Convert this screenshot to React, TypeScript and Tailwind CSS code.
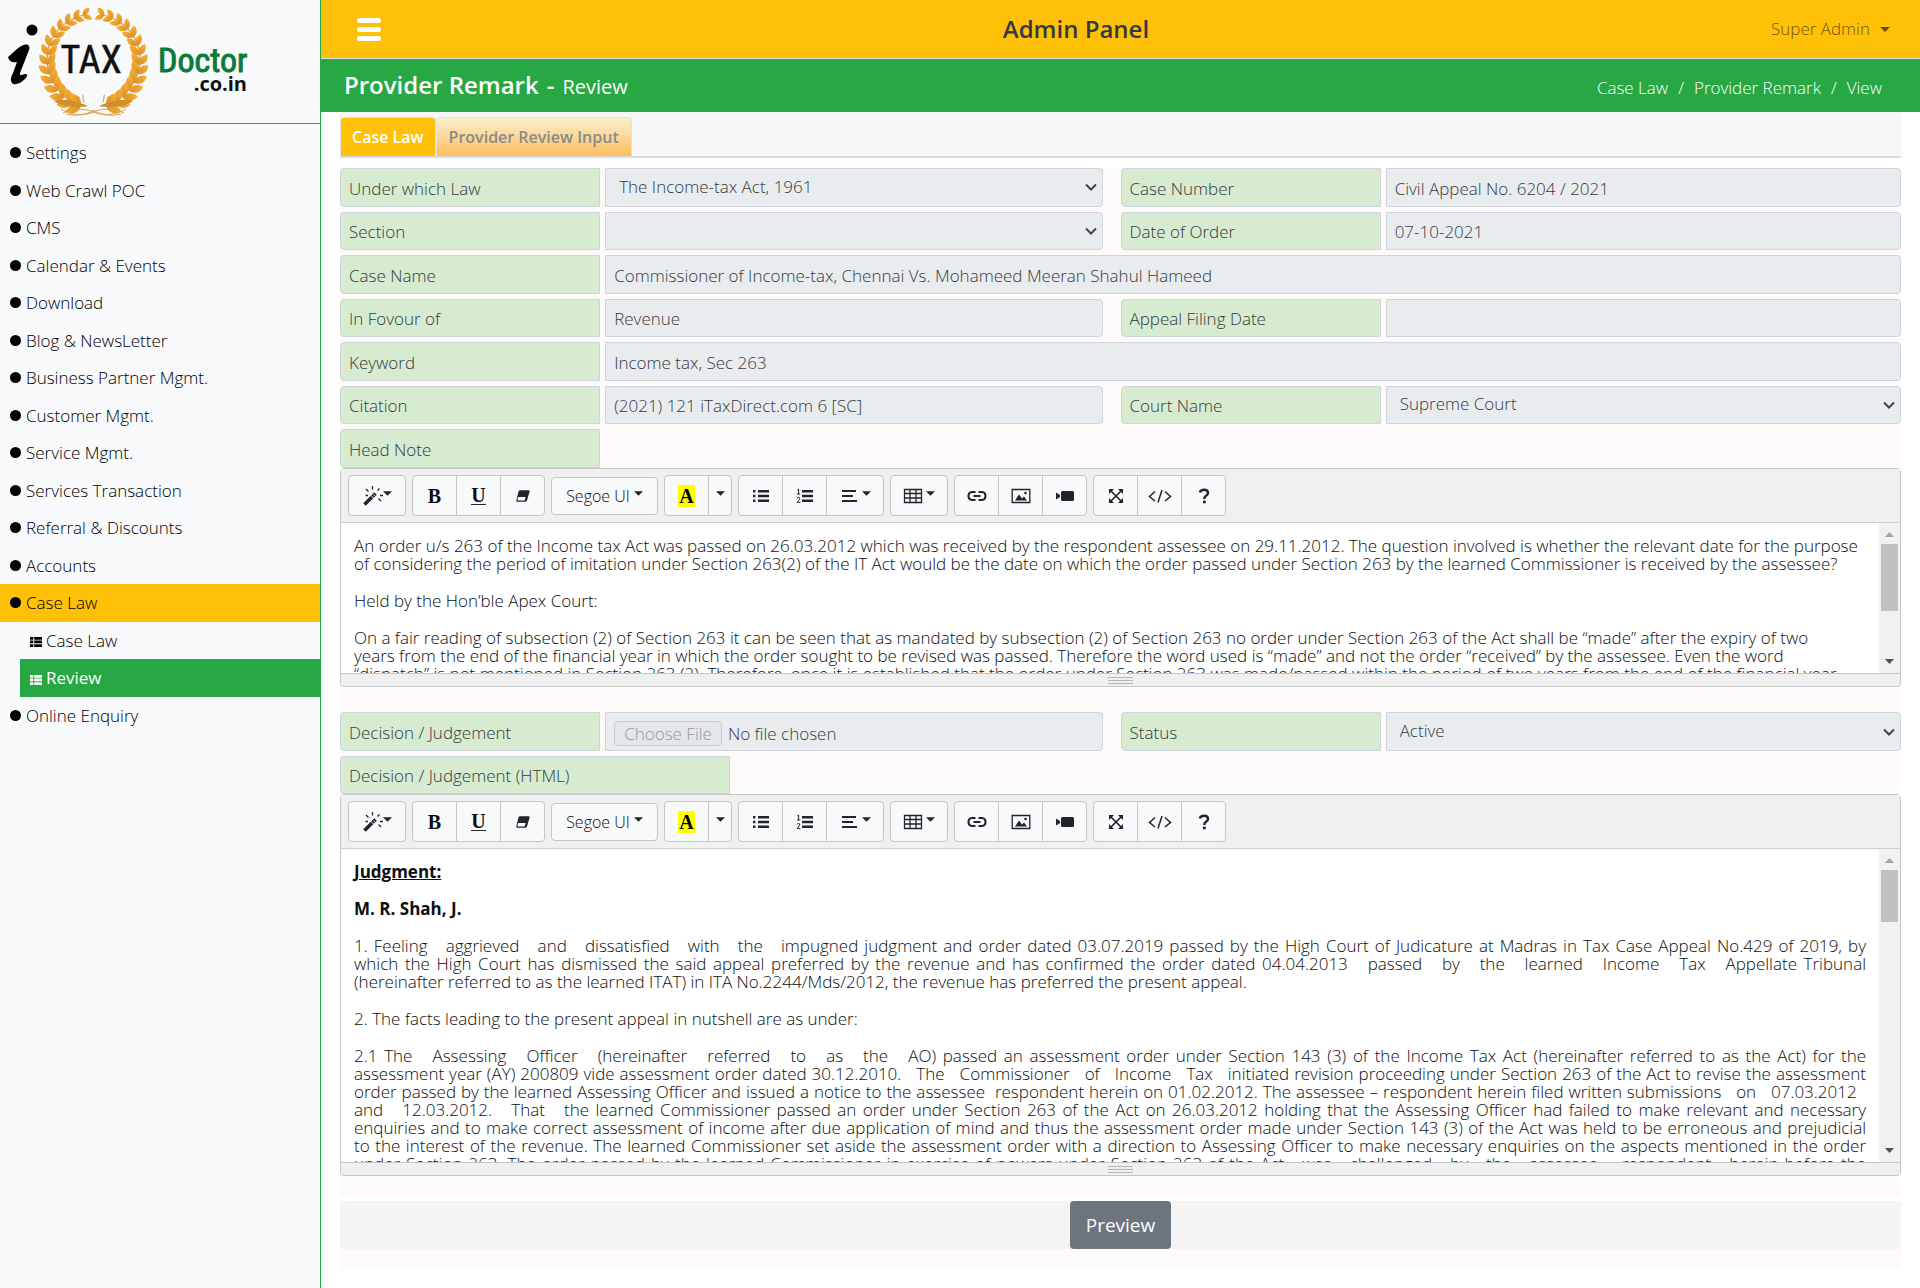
import React from "react";

const menu = [
  "Settings",
  "Web Crawl POC",
  "CMS",
  "Calendar & Events",
  "Download",
  "Blog & NewsLetter",
  "Business Partner Mgmt.",
  "Customer Mgmt.",
  "Service Mgmt.",
  "Services Transaction",
  "Referral & Discounts",
  "Accounts",
];

type Leaf = { x: number; y: number; a: number; s: number };

const leaves: Leaf[] = [];
for (let i = 0; i < 14; i++) {
  const deg = 104 + i * 11.5;
  const t = (deg * Math.PI) / 180;
  const x = 94 + 46 * Math.cos(t);
  const y = 61 - 47 * Math.sin(t);
  const s = 0.72 + i * 0.035;
  leaves.push({ x, y, a: 90 - deg - 36, s });
  leaves.push({ x, y, a: 90 - deg + 36, s });
}
const stem = "M87 14C58 20 46 42 47 62C49 84 64 100 86 106";

function WreathHalf() {
  return (
    <g>
      <path d={stem} fill="none" stroke="url(#gold)" strokeWidth="1.4" />
      {leaves.map((l, i) => (
        <path
          key={i}
          d="M0 0C4 -5 10 -5 14 0C9 4.500 4 4 0 0Z"
          fill="url(#leaf)"
          transform={`translate(${l.x} ${l.y}) rotate(${l.a}) scale(${l.s})`}
        />
      ))}
      <path d="M88 106C76 101 64 98 54 101C62 107 76 108 88 106Z" fill="#cf8f2c" />
      <path d="M84 102C82 97 84 95 82 95M78 101C76 97 78 96 80 98" fill="none" stroke="#cf8f2c" strokeWidth="1" />
      <path d="M61 109C72 116 86 116 96 111C104 108 116 109 124 113M66 114C78 117 88 114 94 110" fill="none" stroke="#d9a24c" strokeWidth="1" />
    </g>
  );
}

function Logo() {
  return (
    <svg viewBox="0 0 260 120" width="260" height="120" role="img" aria-label="iTaxDoctor.co.in">
      <defs>
        <linearGradient id="gold" x1="0" y1="0" x2="0" y2="1">
          <stop offset="0" stopColor="#f9ae2b" />
          <stop offset="1" stopColor="#c98a2a" />
        </linearGradient>
        <linearGradient id="leaf" x1="0" y1="0" x2="1" y2="0">
          <stop offset="0" stopColor="#d9902a" />
          <stop offset="1" stopColor="#f9b032" />
        </linearGradient>
      </defs>
      <WreathHalf />
      <g transform="translate(187 0) scale(-1 1)">
        <WreathHalf />
      </g>
      <circle cx="32" cy="30" r="5.5" />
      <path d="M8 57C13 53 19 46 25 44.500C28 44 30.500 46 29 50L20 73C19.500 76 22 75 25 74C28 73.500 28 76 25 79C21 83 15 86 12 83C10 80 11 77 13 73L17 62C14 63 9 62 8 57Z" />
      <text x="91" y="73" textAnchor="middle" fontFamily="'Roboto Condensed','Liberation Sans Narrow',sans-serif" fontWeight="400" fontSize="38" fill="#111" stroke="#111" strokeWidth=".5">TAX</text>
      <text x="158" y="72" fontFamily="'Roboto Condensed','Liberation Sans Narrow',sans-serif" fontWeight="400" fontSize="34" fill="#0b7a3b" stroke="#0b7a3b" strokeWidth="1">Doctor</text>
      <text x="247" y="91" textAnchor="end" fontFamily="'Open Sans',sans-serif" fontWeight="700" fontSize="20" fill="#111">.co.in</text>
    </svg>
  );
}

function ListIcon() {
  return (
    <svg viewBox="0 0 12 10" className="h-[10px] w-[12px] shrink-0" fill="currentColor" aria-hidden="true">
      <path d="M0 0h3.300v2.700H0zM4.200 0H12v2.700H4.200zM0 3.600h3.300v2.700H0zM4.200 3.600H12v2.700H4.200zM0 7.200h3.300V10H0zM4.200 7.200H12V10H4.200z" />
    </svg>
  );
}

function Sidebar() {
  return (
    <aside className="w-[321px] shrink-0 border-r border-[#28a745] bg-[#f8f9fa]">
      <a href="#home" className="block h-[124px] border-b border-[#28a745]">
        <Logo />
      </a>
      <nav className="mt-[10px] grid min-h-[600px] auto-rows-fr text-[17px] text-black">
        {menu.map((m) => (
          <MenuItem key={m} label={m} />
        ))}
        <MenuItem label="Case Law" active />
        <a href="#case-law" className="ml-5 flex items-center gap-1 pl-[10px]">
          <span className="pt-1"><ListIcon /></span>
          Case Law
        </a>
        <a href="#review" className="ml-5 flex items-center gap-1 bg-[#28a745] pl-[10px] font-normal text-white">
          <span className="pt-1"><ListIcon /></span>
          Review
        </a>
        <MenuItem label="Online Enquiry" />
      </nav>
    </aside>
  );
}

function MenuItem({ label, active }: { label: string; active?: boolean }) {
  return (
    <a href="#menu" className={`flex items-center gap-[5px] pl-[10px] ${active ? "bg-[#ffc107]" : ""}`}>
      <span className="h-[11px] w-[11px] rounded-full bg-black" />
      {label}
    </a>
  );
}

const labelCls = "flex h-full items-center rounded-l border border-[#ced4da] bg-[#d6ebd0] px-2 pt-0.5 text-[17px] text-[#343a40]";
const fieldCls = "block h-full w-full border border-[#ced4da] bg-[#e9ecef] text-[17px] text-[#343a40]";

function Label({ id, children }: { id: string; children: React.ReactNode }) {
  return (
    <div className="col-span-2">
      <label htmlFor={id} className={labelCls}>
        {children}
      </label>
    </div>
  );
}

type Place = "left" | "right" | "full";

function cell(p: Place) {
  if (p === "left") return "col-span-4 pl-[5px] pr-[18px]";
  if (p === "right") return "col-span-4 pl-[5px]";
  return "col-span-10 pl-[5px]";
}

function TextField({ id, value, place }: { id: string; value: string; place: Place }) {
  return (
    <div className={cell(place)}>
      <input id={id} type="text" readOnly value={value} className={`${fieldCls} rounded-r px-2 pt-0.5`} />
    </div>
  );
}

function SelectField({ id, value, place }: { id: string; value: string; place: Place }) {
  return (
    <div className={cell(place)}>
      <div className="relative h-full">
        <select id={id} defaultValue={value} className={`${fieldCls} appearance-none rounded-r pb-[2px] pl-[13px]`}>
          <option value={value}>{value}</option>
        </select>
        <svg viewBox="0 0 12 8" className="pointer-events-none absolute top-1/2 right-[6px] h-2 w-3 -translate-y-1/2" aria-hidden="true">
          <path d="M1 1.500L6 6.500L11 1.500" fill="none" stroke="#444" strokeWidth="2" />
        </svg>
      </div>
    </div>
  );
}

function Caret() {
  return (
    <svg viewBox="0 0 10 5" className="mb-1 h-[5px] w-[9px] shrink-0" fill="#212529" aria-hidden="true">
      <path d="M0 0H10L5 5Z" />
    </svg>
  );
}

const ico = "h-[18px] w-[18px] shrink-0";

function WandIcon() {
  return (
    <svg viewBox="0 0 20 20" className="h-5 w-5 shrink-0" aria-hidden="true">
      <path d="M1.500 18.500L9 11" stroke="#212529" strokeWidth="3.600" />
      <path d="M9.500 10.500L12.500 7.500" stroke="#212529" strokeWidth="3.600" />
      <path d="M10.300 8.400L12 10" stroke="#f8f9fa" strokeWidth=".8" />
      <path d="M9.500 0V3.500M3 3L5.500 5.500M16.500 2.500L14.500 4.500M17 9.500H20M15.500 12.500L18 15M2.500 9.500H5" stroke="#212529" strokeWidth="1.300" />
    </svg>
  );
}

function EraserIcon() {
  return (
    <svg viewBox="0 0 18 18" className={ico} aria-hidden="true">
      <path d="M6 3.200H14.500Q16 3.200 15.600 4.600L13 13.400Q12.600 14.800 11 14.800H3.200Q2 14.800 2.300 13.600L4.600 4.300Q5 3.200 6 3.200Z" fill="#212529" />
      <path d="M4.100 10H11.600L10.700 13.600H3.400Z" fill="#f8f9fa" />
    </svg>
  );
}

function UlIcon() {
  return (
    <svg viewBox="0 0 18 18" className={ico} fill="#212529" aria-hidden="true">
      <path d="M1 3h2.400v2.400H1zM6 3h11v2.400H6zM1 7.800h2.400v2.400H1zM6 7.800h11v2.400H6zM1 12.600h2.400V15H1zM6 12.600h11V15H6z" />
    </svg>
  );
}

function OlIcon() {
  return (
    <svg viewBox="0 0 18 18" className={ico} fill="#212529" aria-hidden="true">
      <path d="M6 3h11v2.400H6zM6 7.800h11v2.400H6zM6 12.600h11V15H6z" />
      <path d="M1.300 3L2.600 2V7M1 7H4.200M1 11.200Q2.400 9.800 3.800 11Q4.200 12.200 1.200 15.400H4.400" fill="none" stroke="#212529" strokeWidth="1" />
    </svg>
  );
}

function AlignIcon() {
  return (
    <svg viewBox="0 0 18 18" className={ico} fill="#212529" aria-hidden="true">
      <path d="M2 3h14v2H2zM2 8h11v2H2zM2 13h15v2H2z" />
    </svg>
  );
}

function TableIcon() {
  return (
    <svg viewBox="0 0 20 18" className="h-[18px] w-5 shrink-0" aria-hidden="true">
      <path d="M1.500 2.500H18.500V15.500H1.500ZM1.500 6.500H18.500M1.500 11H18.500M7 2.500V15.500M13 2.500V15.500" fill="none" stroke="#212529" strokeWidth="1.300" />
    </svg>
  );
}

function LinkIcon() {
  return (
    <svg viewBox="0 0 20 18" className="h-[18px] w-5 shrink-0" aria-hidden="true">
      <path d="M8.500 5H5Q1.500 5.300 1.500 9T5 13H8.500M11.500 5H15Q18.500 5.300 18.500 9T15 13H11.500M6.500 9H13.500" fill="none" stroke="#212529" strokeWidth="2.100" />
    </svg>
  );
}

function PictureIcon() {
  return (
    <svg viewBox="0 0 20 18" className="h-[18px] w-5 shrink-0" aria-hidden="true">
      <path d="M1.200 2.500H18.800V15.500H1.200Z" fill="none" stroke="#212529" strokeWidth="1.300" />
      <path d="M4 13.500L8 7.500L11 11.500L13 9.500L16 13.500Z" fill="#212529" />
      <circle cx="14.500" cy="6" r="1.300" fill="#212529" />
    </svg>
  );
}

function VideoIcon() {
  return (
    <svg viewBox="0 0 20 18" className="h-[18px] w-5 shrink-0" fill="#212529" aria-hidden="true">
      <path d="M7.500 4H17.500Q19 4 19 5.500V12.500Q19 14 17.500 14H7.500Q6 14 6 12.500V5.500Q6 4 7.500 4ZM1 5.500L5 8V10L1 12.500Z" />
    </svg>
  );
}

function FullIcon() {
  return (
    <svg viewBox="0 0 18 18" className={ico} aria-hidden="true">
      <path d="M3.500 3.500L14.500 14.500M14.500 3.500L3.500 14.500" stroke="#212529" strokeWidth="1.600" />
      <path d="M2 7V2H7ZM11 2H16V7ZM2 11V16H7ZM16 11V16H11Z" fill="#212529" />
    </svg>
  );
}

function CodeIcon() {
  return (
    <svg viewBox="0 0 24 18" className="h-[18px] w-6 shrink-0" aria-hidden="true">
      <path d="M7 4.500L1.500 9.500L7 14M17 4.500L22.500 9.500L17 14M14 3L10 15.500" fill="none" stroke="#212529" strokeWidth="1.500" />
    </svg>
  );
}

function HelpIcon() {
  return (
    <svg viewBox="0 0 18 18" className={ico} aria-hidden="true">
      <path d="M4.800 5.500Q5.500 2.800 9.200 2.800T13 6Q13 7.800 10.800 9Q9.300 9.800 9.300 12" fill="none" stroke="#212529" strokeWidth="2.500" />
      <path d="M8 13.600H10.700V16.300H8Z" fill="#212529" />
    </svg>
  );
}

function Group({ children }: { children: React.ReactNode }) {
  return <div className="flex h-[41px] divide-x divide-[#c4c6c8] rounded border border-[#c4c6c8] bg-[#f8f9fa]">{children}</div>;
}

function Tool({ title, size, children }: { title: string; size?: "wide" | "slim"; children: React.ReactNode }) {
  const w = size === "wide" ? "w-14" : size === "slim" ? "w-[22px]" : "w-[43px]";
  return (
    <button type="button" title={title} aria-label={title} className={`box-content flex items-center justify-center ${w}`}>
      {children}
    </button>
  );
}

function Toolbar() {
  return (
    <div className="flex min-h-[54px] flex-wrap items-center gap-[6px] border-b border-[#cfcfcf] bg-[#f0f0f0] pl-[7px]">
      <Group>
        <Tool title="Style" size="wide"><WandIcon /><Caret /></Tool>
      </Group>
      <Group>
        <Tool title="Bold"><span className="font-['Liberation_Serif',serif] text-xl font-bold">B</span></Tool>
        <Tool title="Underline"><span className="border-b border-[#212529] font-['Liberation_Serif',serif] text-xl leading-[17px] font-bold">U</span></Tool>
        <Tool title="Remove Font Style"><EraserIcon /></Tool>
      </Group>
      <button type="button" className="flex h-[38px] w-[107px] items-center justify-center gap-1 rounded border border-[#c4c6c8] bg-[#f8f9fa] text-base">
        Segoe UI <Caret />
      </button>
      <Group>
        <Tool title="Recent Color"><span className="bg-[#ffff00] px-px font-['Liberation_Serif',serif] text-xl leading-[22px] font-bold text-black">A</span></Tool>
        <Tool title="More Color" size="slim"><Caret /></Tool>
      </Group>
      <Group>
        <Tool title="Unordered list"><UlIcon /></Tool>
        <Tool title="Ordered list"><OlIcon /></Tool>
        <Tool title="Paragraph" size="wide"><span className="flex items-center gap-1"><AlignIcon /><Caret /></span></Tool>
      </Group>
      <Group>
        <Tool title="Table" size="wide"><span className="flex items-center gap-[3px]"><TableIcon /><Caret /></span></Tool>
      </Group>
      <Group>
        <Tool title="Link"><LinkIcon /></Tool>
        <Tool title="Picture"><PictureIcon /></Tool>
        <Tool title="Video"><VideoIcon /></Tool>
      </Group>
      <Group>
        <Tool title="Full Screen"><FullIcon /></Tool>
        <Tool title="Code View"><CodeIcon /></Tool>
        <Tool title="Help"><HelpIcon /></Tool>
      </Group>
    </div>
  );
}

function Editor({ height, thumb, label, children }: { height: string; thumb: string; label: string; children: React.ReactNode }) {
  return (
    <section aria-label={label} className="rounded border border-[#c4c6c8] bg-white text-[#0c0e10]">
      <Toolbar />
      <div className={`flex ${height}`}>
        <div className="min-w-0 flex-1 overflow-hidden px-[13px] pt-[14px] text-[17px] leading-[18px]">{children}</div>
        <div className="flex w-[21px] flex-col items-center bg-[#f1f1f1]" aria-hidden="true">
          <svg viewBox="0 0 9 5" className="mt-[9px] h-[5px] w-[9px]" fill="#a3a3a3"><path d="M0 5H9L4.500 0Z" /></svg>
          <div className={`mt-[7px] w-[17px] bg-[#c1c1c1] ${thumb}`} />
          <svg viewBox="0 0 9 5" className="mt-auto mb-[9px] h-[5px] w-[9px]" fill="#505050"><path d="M0 0H9L4.500 5Z" /></svg>
        </div>
      </div>
      <div className="flex h-[13px] flex-col items-center gap-[2px] rounded-b border-t border-[#c4c6c8] bg-[#f0f0f0] pt-[3px]">
        <span className="h-px w-[25px] bg-[#b5b5b5]" />
        <span className="h-px w-[25px] bg-[#b5b5b5]" />
        <span className="h-px w-[25px] bg-[#b5b5b5]" />
      </div>
    </section>
  );
}

function Lines({ rows, justify }: { rows: string[]; justify?: boolean }) {
  return (
    <p className="mb-[19px]">
      {rows.map((r, i) => (
        <span
          key={i}
          className={`block whitespace-nowrap ${justify && i < rows.length - 1 ? "text-justify [text-align-last:justify]" : ""}`}
        >
          {r}
        </span>
      ))}
    </p>
  );
}

const N = "\u00a0";
const wide = (s: string) => s.replace(/_/g, N + " " + N);

const headNote = [
  ["An order u/s 263 of the Income tax Act was passed on 26.03.2012 which was received by the respondent assessee on 29.11.2012. The question involved is whether the relevant date for the purpose", "of considering the period of imitation under Section 263(2) of the IT Act would be the date on which the order passed under Section 263 by the learned Commissioner is received by the assessee?"],
  ["Held by the Hon’ble Apex Court:"],
  ["On a fair reading of subsection (2) of Section 263 it can be seen that as mandated by subsection (2) of Section 263 no order under Section 263 of the Act shall be “made” after the expiry of two", "years from the end of the financial year in which the order sought to be revised was passed. Therefore the word used is “made” and not the order “received” by the assessee. Even the word", "“dispatch” is not mentioned in Section 263 (2). Therefore, once it is established that the order under Section 263 was made/passed within the period of two years from the end of the financial year"],
];

const judgment = [
  [
    wide("1. Feeling_aggrieved_and_dissatisfied_with_the_impugned judgment and order dated 03.07.2019 passed by the High Court of Judicature at Madras in Tax Case Appeal No.429 of 2019, by"),
    wide("which the High Court has dismissed the said appeal preferred by the revenue and has confirmed the order dated 04.04.2013_passed_by_the_learned_Income_Tax_Appellate Tribunal"),
    "(hereinafter referred to as the learned ITAT) in ITA No.2244/Mds/2012, the revenue has preferred the present appeal.",
  ],
  ["2. The facts leading to the present appeal in nutshell are as under:"],
  [
    wide("2.1 The_Assessing_Officer_(hereinafter_referred_to_as_the_AO) passed an assessment order under Section 143 (3) of the Income Tax Act (hereinafter referred to as the Act) for the"),
    wide("assessment year (AY) 200809 vide assessment order dated 30.12.2010._The_Commissioner_of_Income_Tax_initiated revision proceeding under Section 263 of the Act to revise the assessment"),
    wide("order passed by the learned Assessing Officer and issued a notice to the assessee" + N + " respondent herein on 01.02.2012. The assessee – respondent herein filed written submissions_on_07.03.2012" + N + N),
    wide("and_12.03.2012._That_the learned Commissioner passed an order under Section 263 of the Act on 26.03.2012 holding that the Assessing Officer had failed to make relevant and necessary"),
    "enquiries and to make correct assessment of income after due application of mind and thus the assessment order made under Section 143 (3) of the Act was held to be erroneous and prejudicial",
    "to the interest of the revenue. The learned Commissioner set aside the assessment order with a direction to Assessing Officer to make necessary enquiries on the aspects mentioned in the order",
    wide("under Section 263. The order passed by the learned Commissioner in exercise of powers under Section 263 of the Act_was_challenged_by_the_assessee_" + N + "respondent_herein before the"),
    "",
  ],
];

export default function App() {
  return (
    <div className="flex min-h-screen bg-white font-['Open_Sans','Noto_Sans',sans-serif] font-[320]">
      <Sidebar />
      <div className="min-w-0 flex-1">
        <header className="flex h-[59px] items-center border-b border-[#dee2e6] bg-[#ffc107] pr-[30px] pl-9">
          <button type="button" aria-label="Toggle menu" className="flex w-6 flex-col gap-1">
            <span className="h-[5px] rounded-sm bg-white" />
            <span className="h-[5px] rounded-sm bg-white" />
            <span className="h-[5px] rounded-sm bg-white" />
          </button>
          <h1 className="flex-1 text-center text-2xl font-semibold text-[#343a40]">Admin Panel</h1>
          <button type="button" className="flex items-center gap-[10px] text-[17px] text-black/60">
            Super Admin
            <svg viewBox="0 0 10 5" className="h-[5px] w-[10px]" fill="currentColor" aria-hidden="true"><path d="M0 0H10L5 5Z" /></svg>
          </button>
        </header>
        <div className="flex h-[53px] items-center justify-between bg-[#28a745] pr-[38px] pl-[23px] text-white">
          <h2 className="flex items-baseline gap-2 pb-0.5 text-2xl font-semibold">
            Provider Remark <span>-</span> <small className="text-xl font-normal">Review</small>
          </h2>
          <nav aria-label="Breadcrumb" className="flex gap-[10px] pt-1 text-[17px] font-[350]">
            <a href="#case">Case Law</a>
            <span>/</span>
            <a href="#remark">Provider Remark</a>
            <span>/</span>
            <span>View</span>
          </nav>
        </div>

        <main className="px-[19px]">
          <div role="tablist" className="flex h-[46px] items-end border-b-2 border-[#d9dcdf] bg-[#f7f7f7] text-base font-semibold">
            <button type="button" role="tab" aria-selected="true" className="h-[39px] rounded-t border border-b-0 border-[#dee2e6] bg-[#ffc107] px-[11px] text-white">
              Case Law
            </button>
            <button type="button" role="tab" aria-selected="false" className="h-[39px] rounded-t border border-b-0 border-[#dee2e6] bg-linear-to-b from-[#f9efcb] to-[#fdbe5b] px-3 text-[#8a8a8a]">
              Provider Review Input
            </button>
          </div>

          <form className="mt-[10px] bg-[#fffafa] pb-5">
            <div className="grid min-h-[261px] auto-rows-fr grid-cols-12 [&>*]:pb-[5px]">
              <Label id="law">Under which Law</Label>
              <SelectField id="law" value="The Income-tax Act, 1961" place="left" />
              <Label id="number">Case Number</Label>
              <TextField id="number" value="Civil Appeal No. 6204 / 2021" place="right" />

              <Label id="section">Section</Label>
              <SelectField id="section" value="" place="left" />
              <Label id="date">Date of Order</Label>
              <TextField id="date" value="07-10-2021" place="right" />

              <Label id="name">Case Name</Label>
              <TextField id="name" value="Commissioner of Income-tax, Chennai Vs. Mohameed Meeran Shahul Hameed" place="full" />

              <Label id="favour">In Fovour of</Label>
              <TextField id="favour" value="Revenue" place="left" />
              <Label id="filing">Appeal Filing Date</Label>
              <TextField id="filing" value="" place="right" />

              <Label id="keyword">Keyword</Label>
              <TextField id="keyword" value="Income tax, Sec 263" place="full" />

              <Label id="citation">Citation</Label>
              <TextField id="citation" value="(2021) 121 iTaxDirect.com 6 [SC]" place="left" />
              <Label id="court">Court Name</Label>
              <SelectField id="court" value="Supreme Court" place="right" />
            </div>

            <div className="grid h-[39px] grid-cols-12">
              <div className="col-span-2"><div className={labelCls}>Head Note</div></div>
            </div>
            <Editor label="Head Note" height="h-[150px]" thumb="h-[67px]">
              {headNote.map((rows, i) => (
                <Lines key={i} rows={rows} />
              ))}
            </Editor>

            <div className="mt-[25px] grid h-11 grid-cols-12 [&>*]:pb-[5px]">
              <Label id="file">Decision / Judgement</Label>
              <div className="col-span-4 pr-[18px] pl-[5px]">
                <input
                  id="file"
                  type="file"
                  disabled
                  className={`${fieldCls} rounded-r px-2 pt-[8px] leading-6 file:mr-[6px] file:h-[25px] file:rounded-sm file:border file:border-solid file:border-[#c8cbce] file:bg-[#e4e7ea] file:px-[9px] file:text-[#95989b]`}
                />
              </div>
              <Label id="status">Status</Label>
              <SelectField id="status" value="Active" place="right" />
            </div>
            <div className="grid h-[38px] grid-cols-12">
              <div className="col-span-3"><div className={labelCls}>Decision / Judgement (HTML)</div></div>
            </div>
            <Editor label="Decision / Judgement (HTML)" height="h-[313px]" thumb="h-[52px]">
              <p className="mb-[19px] font-bold underline">Judgment:</p>
              <p className="mb-[19px] font-bold">M. R. Shah, J.</p>
              {judgment.map((rows, i) => (
                <Lines key={i} rows={rows} justify />
              ))}
            </Editor>
          </form>

          <div className="mt-[5px] flex justify-center bg-[#f4f4f4]">
            <button type="button" className="h-12 rounded bg-[#6c757d] px-4 text-[19px] font-normal text-white">Preview</button>
          </div>
          <div className="h-5 bg-[#fffafa]" />
        </main>
      </div>
    </div>
  );
}
